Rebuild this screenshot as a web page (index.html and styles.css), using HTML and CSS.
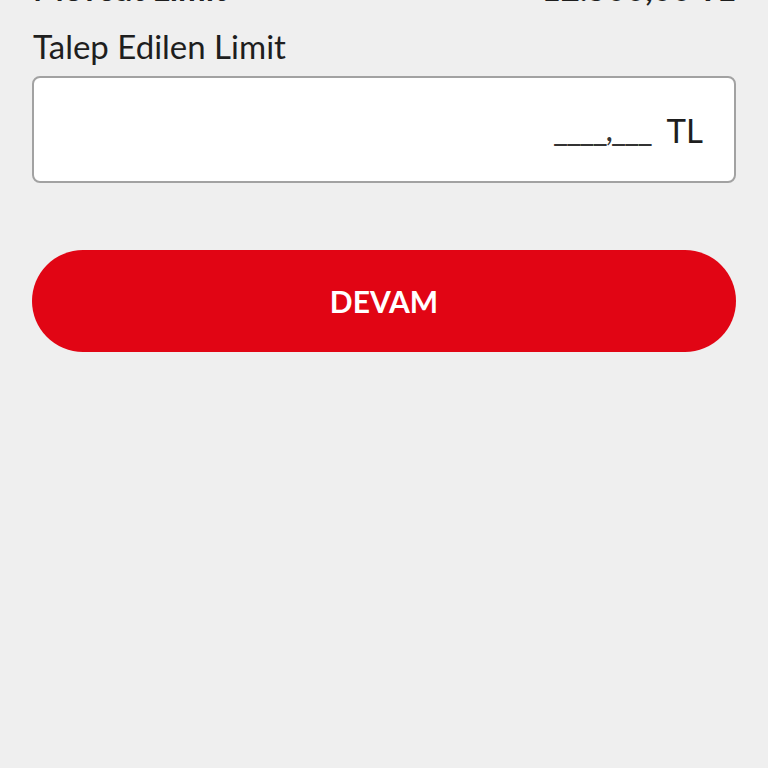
FILE: index.html
```html
<!DOCTYPE html>
<html lang="tr">
<head>
  <meta charset="UTF-8" />
  <meta name="viewport" content="width=device-width, initial-scale=1.0" />
  <title>Limit Artırım</title>
  <link rel="stylesheet" href="styles.css">
</head>
<body>
  <div class="sayfa">
    <div class="satir-mevcut">
      <span>Mevcut Limit</span>
      <span>12.500,00 TL</span>
    </div>

    <label class="etiket" for="talep">Talep Edilen Limit</label>
    <div class="kutu">
      <span class="tutar">____,___</span>
      <span class="birim">TL</span>
    </div>

    <button class="devam">DEVAM</button>
  </div>
</body>
</html>
```

FILE: styles.css
```css
* {
  box-sizing: border-box;
}

html, body {
  margin: 0;
  padding: 0;
  width: 100%;
  height: 100%;
  background-color: #efefef;
  font-family: 'Lato', sans-serif;
  color: #1e1e1e;
}

.sayfa {
  padding: 0 32px;
}

.satir-mevcut {
  display: flex;
  justify-content: space-between;
  font-size: 33px;
  line-height: 40px;
  margin-top: -32px;
  padding: 0 1px;
  font-weight: bold;
}

.etiket {
  display: block;
  font-size: 33px;
  line-height: 40px;
  margin-top: 18px;
  padding-left: 1px;
}

.kutu {
  display: flex;
  justify-content: flex-end;
  align-items: center;
  gap: 16px;
  height: 107px;
  margin-top: 10px;
  padding: 0 31px 0 0;
  background-color: #fff;
  border: 2px solid #a2a2a2;
  border-radius: 8px;
  font-size: 33px;
  line-height: 40px;
}

.tutar {
  color: #333;
  letter-spacing: -2px;
  margin-top: -4px;
}

.devam {
  display: block;
  width: 100%;
  height: 102px;
  margin-top: 67px;
  background-color: #e10514;
  color: #fff;
  border: none;
  border-radius: 51px;
  font-family: 'Lato', sans-serif;
  font-weight: bold;
  font-size: 30px;
  line-height: 40px;
  cursor: pointer;
}
```
